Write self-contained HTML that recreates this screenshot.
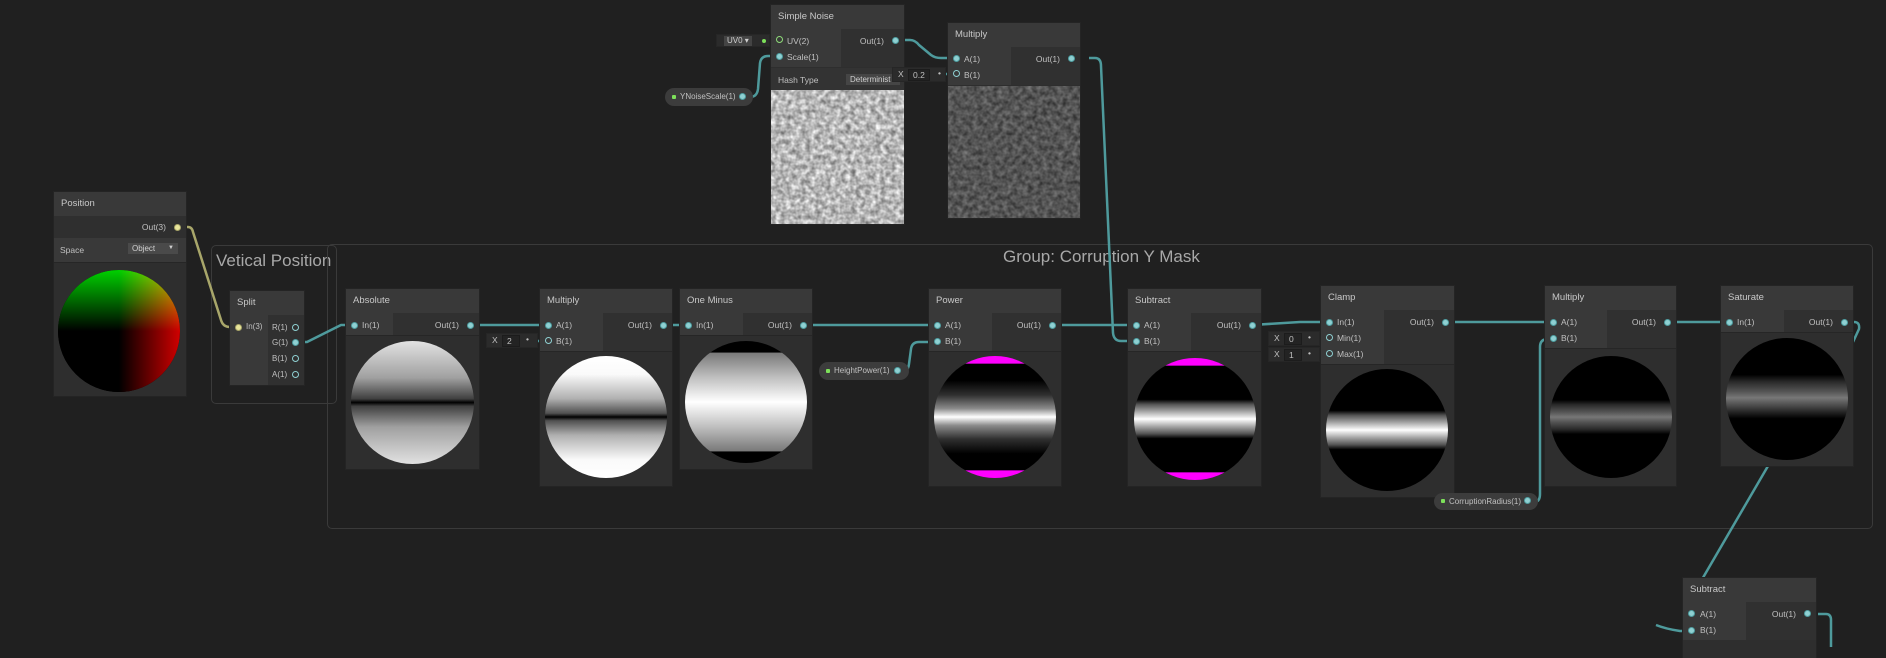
<!DOCTYPE html>
<html><head><meta charset="utf-8">
<style>
*{margin:0;padding:0;box-sizing:border-box}
body{width:1886px;height:647px;background:#202020;overflow:hidden;position:relative;font-family:"Liberation Sans",sans-serif;color:#c4c4c4}
.a{position:absolute}
.grp{position:absolute;border:1px solid #3a3a3a;border-radius:5px}
.gt{position:absolute;font-size:17px;color:#a8a8a8;white-space:nowrap}
.node{position:absolute;background:#2e2e2e;box-shadow:0 0 0 1px #242424}
.hd{position:absolute;left:0;right:0;top:0;height:24px;background:#393939;font-size:9.5px;line-height:24px;padding-left:7px;color:#c8c8c8}
.inc{position:absolute;background:#393939}
.outc{position:absolute;background:#303030}
.pv{position:absolute;background:#2e2e2e;border-top:1px solid #262626}
.lb{position:absolute;font-size:8.5px;line-height:12px;color:#c0c0c0;white-space:nowrap}
.p{position:absolute;width:7px;height:7px;border-radius:50%;background:#8fd0d2;border:1.5px solid #4f9ea1}
.ph{position:absolute;width:7px;height:7px;border-radius:50%;border:1.5px solid #8fd0d2;background:transparent}
.py{background:#e8e59a;border-color:#a9a66a}
.circ{position:absolute;border-radius:50%;overflow:hidden}
.fld{position:absolute;background:#2b2b2b;border:1px solid #262626;font-size:8.5px;color:#c0c0c0}
.fld .x{position:absolute;left:5px;top:1px}
.fld .in{position:absolute;top:1px;background:#232323;border:1px solid #1c1c1c;padding-left:4px;line-height:10px;height:12px}
.pill{position:absolute;background:#3c3c3c;border-radius:9px;font-size:8px;color:#c0c0c0;white-space:nowrap}
.gd{position:absolute;width:4px;height:4px;background:#7de05a;border-radius:1px}
.dd{position:absolute;background:#4a4a4a;font-size:8px;color:#d0d0d0;padding-left:4px;white-space:nowrap;overflow:hidden}
</style></head><body>

<div class="grp" style="left:211px;top:245px;width:126px;height:159px"></div>
<div class="gt" style="left:216px;top:251px;">Vetical Position</div>
<div class="grp" style="left:327px;top:244px;width:1546px;height:285px"></div>
<div class="gt" style="left:1003px;top:247px;">Group: Corruption Y Mask</div>

<svg class="a" style="left:0;top:0" width="1886" height="647">
<g fill="none" stroke-width="2.5" stroke="#4e9a9c" stroke-linejoin="round">
<path d="M295,342 h12 L341,325 h13"/>
<path d="M470,325 H547"/>
<path d="M529,341 H547"/>
<path d="M664,325 H687"/>
<path d="M804,325 H935"/>
<path d="M902,372 q6,0 7,-8 L911,349 q1,-7 8,-7 h16"/>
<path d="M1053,325 H1134"/>
<path d="M1252,325 L1300,322 H1328"/>
<path d="M1311,337 H1328"/>
<path d="M1311,354 H1328"/>
<path d="M1446,322 H1552"/>
<path d="M1534,502 q6,0 6,-8 L1540,347 q0,-8 8,-8 h4"/>
<path d="M1666,322 H1727"/>
<path d="M1844,322 h10 q6,0 5,7 L1853,342"/>
<path d="M1768,466 L1697,588 q-8,14 0,22 q3,4 9,4 h-2"/>
<path d="M1656,625 q10,4 24,6 h9"/>
<path d="M1818,614 h8 q5,0 5,6 L1831,647"/>
<path d="M896,40 h14 q5,0 9,5 L931,55 q4,3 10,3 h13"/>
<path d="M931,74 H954"/>
<path d="M750,97 q7,0 8,-8 L760,63 q1,-7 8,-7 h9"/>
<path d="M1089,58 h6 q6,0 6,8 L1113,333 q1,8 8,8 h13"/>
</g>
<path d="M179,227 h9 q4,0 5,5 L221,320 q2,7 9,7 h8" fill="none" stroke="#a8a66a" stroke-width="2.5"/>
<path d="M757,40 H777" fill="none" stroke="#7dbf6a" stroke-width="2.5"/>
</svg>

<div class="node" style="left:54px;top:192px;width:132px;height:204px">
 <div class="hd">Position</div>
 <div class="outc" style="left:0;right:0;top:24px;height:22px;background:#2f2f2f"></div>
 <div class="lb" style="right:20px;top:29px">Out(3)</div>
 <div class="p py" style="right:5px;top:32px"></div>
 <div class="inc" style="left:0;right:0;top:46px;height:24px;background:#393939"></div>
 <div class="lb" style="left:6px;top:52px">Space</div>
 <div class="dd" style="left:74px;top:51px;width:50px;height:11px;line-height:11px">Object <span style="position:absolute;right:4px;font-size:6px">▼</span></div>
 <div class="pv" style="left:0;right:0;top:70px;bottom:0"></div>
 <div class="circ" style="left:4px;top:78px;width:122px;height:122px;background:#000">
  <div class="a" style="inset:0;background:linear-gradient(to right,#000 50%,#d00000 100%)"></div>
  <div class="a" style="inset:0;background:linear-gradient(to top,#000 50%,#00d000 100%);mix-blend-mode:screen"></div>
 </div>
</div>

<div class="node" style="left:230px;top:291px;width:74px;height:94px">
 <div class="hd">Split</div>
 <div class="inc" style="left:0;width:38px;top:24px;bottom:0"></div>
 <div class="outc" style="left:38px;right:0;top:24px;bottom:0"></div>
 <div class="p py" style="left:5px;top:33px"></div><div class="lb" style="left:16px;top:30px;font-size:8px">In(3)</div>
 <div class="lb" style="left:42px;top:31px;font-size:8px">R(1)</div><div class="ph" style="right:5px;top:33px"></div>
 <div class="lb" style="left:42px;top:46px;font-size:8px">G(1)</div><div class="p" style="right:5px;top:48px"></div>
 <div class="lb" style="left:42px;top:62px;font-size:8px">B(1)</div><div class="ph" style="right:5px;top:64px"></div>
 <div class="lb" style="left:42px;top:78px;font-size:8px">A(1)</div><div class="ph" style="right:5px;top:80px"></div>
</div>

<div class="node" style="left:346px;top:289px;width:133px;height:180px">
 <div class="hd">Absolute</div>
 <div class="inc" style="left:0;width:47px;top:24px;height:22px"></div>
 <div class="outc" style="left:47px;right:0;top:24px;height:22px"></div>
 <div class="p" style="left:5px;top:33px"></div><div class="lb" style="left:16px;top:30px">In(1)</div>
 <div class="lb" style="right:20px;top:30px">Out(1)</div><div class="p" style="right:5px;top:33px"></div>
 <div class="pv" style="left:0;right:0;top:46px;bottom:0"></div>
 <div class="circ" style="left:5px;top:52px;width:123px;height:123px;background:linear-gradient(#e2e2e2 0%,#a0a0a0 30%,#404040 47%,#000 50%,#404040 53%,#a0a0a0 70%,#e2e2e2 100%)"></div>
</div>

<div class="fld" style="left:486px;top:333px;width:52px;height:15px"><span class="x">X</span><span class="in" style="left:15px;width:18px">2</span><span style="position:absolute;right:8px;top:0">•</span></div>

<div class="node" style="left:540px;top:289px;width:132px;height:197px">
 <div class="hd">Multiply</div>
 <div class="inc" style="left:0;width:63px;top:24px;height:38px"></div>
 <div class="outc" style="left:63px;right:0;top:24px;height:38px"></div>
 <div class="p" style="left:5px;top:33px"></div><div class="lb" style="left:16px;top:30px">A(1)</div>
 <div class="ph" style="left:5px;top:48px"></div><div class="lb" style="left:16px;top:46px">B(1)</div>
 <div class="lb" style="right:20px;top:30px">Out(1)</div><div class="p" style="right:5px;top:33px"></div>
 <div class="pv" style="left:0;right:0;top:62px;bottom:0"></div>
 <div class="circ" style="left:5px;top:67px;width:122px;height:122px;background:linear-gradient(#fff 0%,#fafafa 15%,#b0b0b0 35%,#505050 47%,#000 50%,#505050 53%,#b0b0b0 65%,#fafafa 85%,#fff 100%)"></div>
</div>

<div class="node" style="left:680px;top:289px;width:132px;height:180px">
 <div class="hd">One Minus</div>
 <div class="inc" style="left:0;width:63px;top:24px;height:22px"></div>
 <div class="outc" style="left:63px;right:0;top:24px;height:22px"></div>
 <div class="p" style="left:5px;top:33px"></div><div class="lb" style="left:16px;top:30px">In(1)</div>
 <div class="lb" style="right:20px;top:30px">Out(1)</div><div class="p" style="right:5px;top:33px"></div>
 <div class="pv" style="left:0;right:0;top:46px;bottom:0"></div>
 <div class="circ" style="left:5px;top:52px;width:122px;height:122px;background:linear-gradient(#000 0%,#000 9%,#7a7a7a 10%,#c0c0c0 30%,#fff 50%,#c0c0c0 70%,#7a7a7a 90%,#000 91%,#000 100%)"></div>
</div>

<div class="pill" style="left:819px;top:362px;width:90px;height:18px"><div class="gd" style="left:7px;top:7px"></div><span class="a" style="left:15px;top:4px">HeightPower(1)</span><div class="p" style="left:75px;top:5px"></div></div>

<div class="node" style="left:929px;top:289px;width:132px;height:197px">
 <div class="hd">Power</div>
 <div class="inc" style="left:0;width:63px;top:24px;height:38px"></div>
 <div class="outc" style="left:63px;right:0;top:24px;height:38px"></div>
 <div class="p" style="left:5px;top:33px"></div><div class="lb" style="left:16px;top:30px">A(1)</div>
 <div class="p" style="left:5px;top:49px"></div><div class="lb" style="left:16px;top:46px">B(1)</div>
 <div class="lb" style="right:20px;top:30px">Out(1)</div><div class="p" style="right:5px;top:33px"></div>
 <div class="pv" style="left:0;right:0;top:62px;bottom:0"></div>
 <div class="circ" style="left:5px;top:67px;width:122px;height:122px;background:linear-gradient(#ff00ff 0%,#ff00ff 6%,#000 6.5%,#000 20%,#303030 32%,#8a8a8a 43%,#fff 50%,#8a8a8a 57%,#303030 68%,#000 80%,#000 93.5%,#ff00ff 94%)"></div>
</div>

<div class="node" style="left:1128px;top:289px;width:133px;height:197px">
 <div class="hd">Subtract</div>
 <div class="inc" style="left:0;width:63px;top:24px;height:38px"></div>
 <div class="outc" style="left:63px;right:0;top:24px;height:38px"></div>
 <div class="p" style="left:5px;top:33px"></div><div class="lb" style="left:16px;top:30px">A(1)</div>
 <div class="p" style="left:5px;top:49px"></div><div class="lb" style="left:16px;top:46px">B(1)</div>
 <div class="lb" style="right:20px;top:30px">Out(1)</div><div class="p" style="right:5px;top:33px"></div>
 <div class="pv" style="left:0;right:0;top:62px;bottom:0"></div>
 <div class="circ" style="left:6px;top:69px;width:122px;height:122px;background:linear-gradient(#ff00ff 0%,#ff00ff 6%,#000 6.5%,#000 34%,#555 38%,#a8a8a8 44%,#fff 50%,#a8a8a8 56%,#555 62%,#000 66%,#000 93.5%,#ff00ff 94%)"></div>
</div>

<div class="fld" style="left:1268px;top:331px;width:52px;height:15px"><span class="x">X</span><span class="in" style="left:15px;width:18px">0</span><span style="position:absolute;right:8px;top:0">•</span></div>
<div class="fld" style="left:1268px;top:347px;width:52px;height:15px"><span class="x">X</span><span class="in" style="left:15px;width:18px">1</span><span style="position:absolute;right:8px;top:0">•</span></div>

<div class="node" style="left:1321px;top:286px;width:133px;height:211px">
 <div class="hd">Clamp</div>
 <div class="inc" style="left:0;width:63px;top:24px;height:54px"></div>
 <div class="outc" style="left:63px;right:0;top:24px;height:54px"></div>
 <div class="p" style="left:5px;top:33px"></div><div class="lb" style="left:16px;top:30px">In(1)</div>
 <div class="ph" style="left:5px;top:48px"></div><div class="lb" style="left:16px;top:46px">Min(1)</div>
 <div class="ph" style="left:5px;top:64px"></div><div class="lb" style="left:16px;top:62px">Max(1)</div>
 <div class="lb" style="right:20px;top:30px">Out(1)</div><div class="p" style="right:5px;top:33px"></div>
 <div class="pv" style="left:0;right:0;top:78px;bottom:0"></div>
 <div class="circ" style="left:5px;top:83px;width:122px;height:122px;background:linear-gradient(#000 0%,#000 34%,#555 38%,#a8a8a8 44%,#fff 50%,#a8a8a8 56%,#555 62%,#000 66%,#000 100%)"></div>
</div>

<div class="pill" style="left:1434px;top:493px;width:104px;height:17px"><div class="gd" style="left:7px;top:6px"></div><span class="a" style="left:15px;top:4px">CorruptionRadius(1)</span><div class="p" style="left:90px;top:4px"></div></div>

<div class="node" style="left:1545px;top:286px;width:131px;height:200px">
 <div class="hd">Multiply</div>
 <div class="inc" style="left:0;width:62px;top:24px;height:38px"></div>
 <div class="outc" style="left:62px;right:0;top:24px;height:38px"></div>
 <div class="p" style="left:5px;top:33px"></div><div class="lb" style="left:16px;top:30px">A(1)</div>
 <div class="p" style="left:5px;top:49px"></div><div class="lb" style="left:16px;top:46px">B(1)</div>
 <div class="lb" style="right:20px;top:30px">Out(1)</div><div class="p" style="right:5px;top:33px"></div>
 <div class="pv" style="left:0;right:0;top:62px;bottom:0"></div>
 <div class="circ" style="left:5px;top:70px;width:122px;height:122px;background:linear-gradient(#000 0%,#000 36%,#2a2a2a 40%,#555 46%,#777 50%,#555 54%,#2a2a2a 60%,#000 64%,#000 100%)"></div>
</div>

<div class="node" style="left:1721px;top:286px;width:132px;height:180px">
 <div class="hd">Saturate</div>
 <div class="inc" style="left:0;width:63px;top:24px;height:22px"></div>
 <div class="outc" style="left:63px;right:0;top:24px;height:22px"></div>
 <div class="p" style="left:5px;top:33px"></div><div class="lb" style="left:16px;top:30px">In(1)</div>
 <div class="lb" style="right:20px;top:30px">Out(1)</div><div class="p" style="right:5px;top:33px"></div>
 <div class="pv" style="left:0;right:0;top:46px;bottom:0"></div>
 <div class="circ" style="left:5px;top:52px;width:122px;height:122px;background:linear-gradient(#000 0%,#000 30%,#2a2a2a 36%,#555 44%,#777 49%,#555 54%,#2a2a2a 60%,#000 66%,#000 100%)"></div>
</div>

<div class="node" style="left:1683px;top:578px;width:133px;height:80px">
 <div class="hd">Subtract</div>
 <div class="inc" style="left:0;width:63px;top:24px;height:38px"></div>
 <div class="outc" style="left:63px;right:0;top:24px;height:38px"></div>
 <div class="p" style="left:5px;top:32px"></div><div class="lb" style="left:17px;top:30px">A(1)</div>
 <div class="p" style="left:5px;top:49px"></div><div class="lb" style="left:17px;top:46px">B(1)</div>
 <div class="lb" style="right:20px;top:30px">Out(1)</div><div class="p" style="right:5px;top:32px"></div>
</div>

<svg width="0" height="0" class="a">
<filter id="nA" x="0" y="0" width="100%" height="100%" color-interpolation-filters="sRGB"><feTurbulence type="fractalNoise" baseFrequency="0.2" numOctaves="2" seed="3"/><feColorMatrix type="matrix" values="0.75 0 0 0 0.34  0.75 0 0 0 0.34  0.75 0 0 0 0.34  0 0 0 0 1"/></filter>
<filter id="nB" x="0" y="0" width="100%" height="100%" color-interpolation-filters="sRGB"><feTurbulence type="fractalNoise" baseFrequency="0.2" numOctaves="2" seed="7"/><feColorMatrix type="matrix" values="0.4 0 0 0 0.13  0.4 0 0 0 0.13  0.4 0 0 0 0.13  0 0 0 0 1"/></filter>
</svg>

<div class="dd" style="left:716px;top:34px;width:54px;height:13px;background:#2b2b2b;border:1px solid #262626"><span class="a" style="left:7px;top:1px;background:#444;padding:0 3px;line-height:10px">UV0 ▾</span><span class="gd" style="left:45px;top:4px;border-radius:50%"></span></div>
<div class="pill" style="left:665px;top:88px;width:88px;height:18px"><div class="gd" style="left:7px;top:7px"></div><span class="a" style="left:15px;top:4px">YNoiseScale(1)</span><div class="p" style="left:74px;top:5px"></div></div>
<div class="node" style="left:771px;top:5px;width:133px;height:219px">
 <div class="hd">Simple Noise</div>
 <div class="inc" style="left:0;width:70px;top:24px;height:38px"></div>
 <div class="outc" style="left:70px;right:0;top:24px;height:38px"></div>
 <div class="ph" style="left:5px;top:31px;border-color:#8fdc7a"></div><div class="lb" style="left:16px;top:30px">UV(2)</div>
 <div class="p" style="left:5px;top:48px"></div><div class="lb" style="left:16px;top:46px">Scale(1)</div>
 <div class="lb" style="right:20px;top:30px">Out(1)</div><div class="p" style="right:5px;top:32px"></div>
 <div class="inc" style="left:0;right:0;top:63px;height:22px;background:#333"></div>
 <div class="lb" style="left:7px;top:69px">Hash Type</div>
 <div class="dd" style="left:75px;top:69px;width:54px;height:11px;line-height:11px;background:#454545">Determinist ▾</div>
 <svg class="a" style="left:0;top:85px" width="133" height="134"><rect width="133" height="134" filter="url(#nA)"/></svg>
</div>

<div class="fld" style="left:892px;top:67px;width:54px;height:15px;background:#2b2b2b"><span class="x">X</span><span class="in" style="left:15px;width:22px">0.2</span><span style="position:absolute;right:4px;top:0">•</span></div>

<div class="node" style="left:948px;top:23px;width:132px;height:195px">
 <div class="hd">Multiply</div>
 <div class="inc" style="left:0;width:63px;top:24px;height:38px"></div>
 <div class="outc" style="left:63px;right:0;top:24px;height:38px"></div>
 <div class="p" style="left:5px;top:32px"></div><div class="lb" style="left:16px;top:30px">A(1)</div>
 <div class="ph" style="left:5px;top:47px"></div><div class="lb" style="left:16px;top:46px">B(1)</div>
 <div class="lb" style="right:20px;top:30px">Out(1)</div><div class="p" style="right:5px;top:32px"></div>
 <svg class="a" style="left:0;top:63px" width="132" height="132"><rect width="132" height="132" filter="url(#nB)"/></svg>
</div>

</body></html>
